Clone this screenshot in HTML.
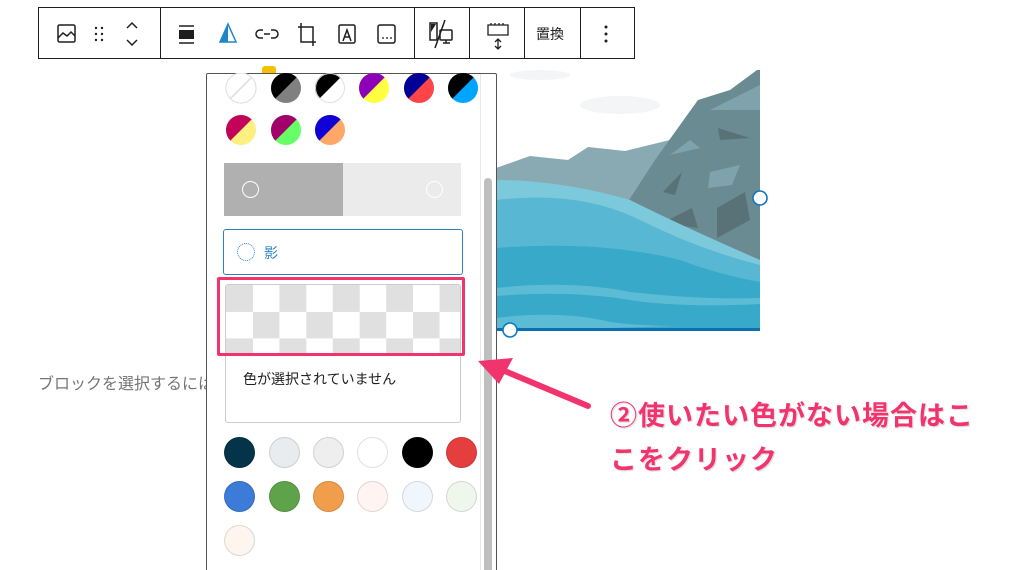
<!DOCTYPE html>
<html><head><meta charset="utf-8"><style>
*{box-sizing:border-box;margin:0;padding:0}
html,body{width:1024px;height:570px;overflow:hidden}
body{background:#fff;position:relative;font-family:"Liberation Sans","Noto Sans CJK JP",sans-serif}
.abs{position:absolute}
.tb{position:absolute;left:38px;top:7px;width:597px;height:52px;border:1px solid #1e1e1e;background:#fff}
.dv{position:absolute;top:0;width:1px;height:50px;background:#1e1e1e}
.sw{position:absolute;width:31px;height:31px;border-radius:50%;border:1px solid rgba(0,0,0,.12)}
.pop{position:absolute;left:206px;top:73px;width:291px;height:520px;border:1px solid #555;background:#fff;border-radius:2px;overflow:hidden}
.ann{position:absolute;color:#f2346e;font-weight:bold;font-size:27px;letter-spacing:1px;text-shadow:0 0 2px #fff,1px 1px 1px #ccc,0 0 4px #fff}
</style></head><body>

<div class="abs" style="left:38px;top:370px;width:168px;overflow:hidden;font-size:16px;color:#757575;white-space:nowrap">ブロックを選択するには</div>

<!-- image -->
<svg class="abs" style="left:480px;top:60px" width="300" height="290" viewBox="0 0 300 290">
<g fill="#f4f5f6"><ellipse cx="140" cy="45" rx="40" ry="9"/><ellipse cx="60" cy="15" rx="30" ry="5"/></g>
<path d="M16 108 L50 96 L88 100 L108 87 L145 91 L190 80 L280 70 L280 200 L16 200Z" fill="#89aab3"/>
<path d="M136 160 L175 100 L200 65 L218 40 L250 30 L277 10 L280 10 L280 210 L200 200Z" fill="#6a8b92"/>
<path d="M230 50 L280 25 L280 50Z M190 95 L210 80 L220 88Z M230 112 L260 105 L252 125 L228 128Z" fill="#7fa3ad"/>
<path d="M238 68 L270 78 L240 80Z M183 132 L202 112 L195 135Z M182 163 L212 148 L218 168Z M237 148 L265 132 L270 160 L237 178Z" fill="#587278"/>
<path d="M16 120 Q80 120 150 140 Q200 165 280 200 L280 271 L16 271Z" fill="#7cc9dc"/>
<path d="M16 140 Q100 130 160 160 Q220 190 280 205 L280 271 L16 271Z" fill="#58b7d2"/>
<path d="M16 188 Q120 180 200 200 Q240 215 280 222 L280 271 L16 271Z" fill="#38a9c9"/>
<path d="M16 228 Q90 220 150 232 Q220 240 280 238 L280 244 Q200 248 150 240 Q90 230 16 236Z M16 258 Q80 250 130 262 Q160 266 200 266 L16 271Z" fill="#5dbcd5"/>
<rect x="16" y="268" width="264" height="3" fill="#0a6fb0"/>
<circle cx="280" cy="138" r="7" fill="#fff" stroke="#0a78c2" stroke-width="1.6"/>
<circle cx="30" cy="270" r="7" fill="#fff" stroke="#0a78c2" stroke-width="1.6"/>
</svg>

<!-- toolbar -->
<div class="tb">
<div class="dv" style="left:121px"></div><div class="dv" style="left:375px"></div><div class="dv" style="left:430px"></div><div class="dv" style="left:485px"></div><div class="dv" style="left:541px"></div>
<svg class="abs" style="left:0;top:0" width="597" height="52" fill="none" stroke="#1e1e1e" stroke-width="1.5">
<rect x="19" y="17" width="17" height="17" rx="1.5"/><path d="M19 30 L24 25 L28 28 L32 24 L36 28"/>
<g fill="#1e1e1e" stroke="none"><circle cx="57" cy="20" r="1.2"/><circle cx="63" cy="20" r="1.2"/><circle cx="57" cy="26" r="1.2"/><circle cx="63" cy="26" r="1.2"/><circle cx="57" cy="32" r="1.2"/><circle cx="63" cy="32" r="1.2"/></g>
<path d="M88 20 L93 15 L98 20 M88 32 L93 37 L98 32"/>
<path d="M140 18 H155 M140 35 H155"/><rect x="140" y="22" width="15" height="9" fill="#1e1e1e" stroke="none"/>
<path d="M189 16 L181 34 H197Z" fill="#fff" stroke="#1e87c9"/><path d="M189 16 L181 34 H189Z" fill="#1e87c9" stroke="none"/>
<path d="M224 22 H221 A4 4 0 0 0 221 30 H224 M232 22 H235 A4 4 0 0 1 235 30 H232 M225 26 H231"/>
<path d="M262 15 V34 H277 M259 19 H274 V38"/>
<rect x="300" y="17" width="16" height="18" rx="1.5"/><path d="M304 33 L308 22 L312 33 M305 29 H311"/>
<rect x="339" y="17" width="17" height="18" rx="2"/><path d="M343 30 H345 M347 30 H349 M351 30 H353" stroke-width="1.2"/>
<path d="M391 15 H398 V32 H391Z" /><path d="M392 16 L397 16 L392 24Z" fill="#1e1e1e" stroke="none"/>
<rect x="401" y="22" width="12" height="10" rx="1"/><path d="M404 35 H411 M407 32 V35 M396 40 L406 12"/>
<path d="M449 17 H469 V27 H449Z M452 17 V15 M456 17 V15 M460 17 V15 M464 17 V15 M459 31 V41 M456 34 L459 31 L462 34 M456 38 L459 41 L462 38" stroke-width="1.3"/>
<g fill="#1e1e1e" stroke="none"><circle cx="567" cy="19" r="1.5"/><circle cx="567" cy="26" r="1.5"/><circle cx="567" cy="33" r="1.5"/></g>
</svg>
<div class="abs" style="left:497px;top:16px;font-size:14px;color:#1e1e1e">置換</div>
</div>
<div class="abs" style="left:262px;top:66px;width:14px;height:8px;background:#f5c000;border-radius:3px 3px 0 0"></div>

<!-- popover -->
<div class="pop">
<div class="abs" style="left:277px;top:104px;width:8px;height:420px;background:#bfbfbf;border-radius:4px"></div>
<div class="abs" style="left:273px;top:0;width:1px;height:520px;background:#e8e8e8"></div>
</div>
<svg class="abs" style="left:206px;top:73px" width="280" height="100" viewBox="0 0 280 100">
<defs><clipPath id="c"><circle r="15"/></clipPath></defs>
<g transform="translate(35,15)"><circle r="15" fill="#fff" stroke="#ddd"/><path d="M-10 10 L10 -10" stroke="#ddd" stroke-width="1.5"/></g>
<g transform="translate(80,15)" clip-path="url(#c)"><rect x="-16" y="-16" width="32" height="32" fill="#808080"/><path d="M-16 -16 H16 L-16 16Z" fill="#000"/></g>
<g transform="translate(124,15)" clip-path="url(#c)"><rect x="-16" y="-16" width="32" height="32" fill="#fff"/><path d="M-16 -16 H16 L-16 16Z" fill="#000"/><circle r="14.5" fill="none" stroke="#ddd"/></g>
<g transform="translate(168,15)" clip-path="url(#c)"><rect x="-16" y="-16" width="32" height="32" fill="#ffff40"/><path d="M-16 -16 H16 L-16 16Z" fill="#8c00b7"/></g>
<g transform="translate(213,15)" clip-path="url(#c)"><rect x="-16" y="-16" width="32" height="32" fill="#fd4449"/><path d="M-16 -16 H16 L-16 16Z" fill="#000097"/></g>
<g transform="translate(257,15)" clip-path="url(#c)"><rect x="-16" y="-16" width="32" height="32" fill="#00a5ff"/><path d="M-16 -16 H16 L-16 16Z" fill="#000"/></g>
<g transform="translate(35,57)" clip-path="url(#c)"><rect x="-16" y="-16" width="32" height="32" fill="#fdf080"/><path d="M-16 -16 H16 L-16 16Z" fill="#c2035a"/></g>
<g transform="translate(80,57)" clip-path="url(#c)"><rect x="-16" y="-16" width="32" height="32" fill="#66ff66"/><path d="M-16 -16 H16 L-16 16Z" fill="#a2006b"/></g>
<g transform="translate(124,57)" clip-path="url(#c)"><rect x="-16" y="-16" width="32" height="32" fill="#fea766"/><path d="M-16 -16 H16 L-16 16Z" fill="#1100d6"/></g>
</svg>
<div class="abs" style="left:224px;top:163px;width:119px;height:53px;background:#b0b0b0"></div>
<div class="abs" style="left:343px;top:163px;width:118px;height:53px;background:#ebebeb"></div>
<div class="abs" style="left:242px;top:181px;width:17px;height:17px;border:1.5px solid #fff;border-radius:50%"></div>
<div class="abs" style="left:426px;top:181px;width:17px;height:17px;border:1.5px solid #fff;border-radius:50%"></div>
<div class="abs" style="left:223px;top:229px;width:240px;height:46px;border:1.5px solid #2b84c2;border-radius:3px"></div>
<div class="abs" style="left:237px;top:243px;width:18px;height:18px;border:1.5px dotted #2b84c2;border-radius:50%"></div>
<div class="abs" style="left:264px;top:243px;font-size:14px;color:#2b84c2">影</div>
<div class="abs" style="left:225px;top:284px;width:236px;height:139px;border:1px solid #ccc;border-radius:3px;overflow:hidden">
<div style="height:71px;background-color:#fff;background-image:conic-gradient(#fff 0 25%,#e0e0e0 0 50%,#fff 0 75%,#e0e0e0 0);background-size:53.4px 53.4px;background-position:0 0"></div>
</div>
<div class="abs" style="left:217px;top:277px;width:248px;height:79px;border:3px solid #f2346e;border-radius:2px"></div>
<div class="abs" style="left:243px;top:369px;font-size:14px;color:#1e1e1e">色が選択されていません</div>
<div class="sw" style="left:224px;top:437px;background:#04344a"></div>
<div class="sw" style="left:269px;top:437px;background:#e8ecef"></div>
<div class="sw" style="left:313px;top:437px;background:#eeeeee"></div>
<div class="sw" style="left:357px;top:437px;background:#fff"></div>
<div class="sw" style="left:402px;top:437px;background:#000"></div>
<div class="sw" style="left:446px;top:437px;background:#e43e3e"></div>
<div class="sw" style="left:224px;top:481px;background:#3c7bd7"></div>
<div class="sw" style="left:269px;top:481px;background:#5ea34a"></div>
<div class="sw" style="left:313px;top:481px;background:#f09e4c"></div>
<div class="sw" style="left:357px;top:481px;background:#fff4f1"></div>
<div class="sw" style="left:402px;top:481px;background:#f1f6fd"></div>
<div class="sw" style="left:446px;top:481px;background:#eff7ed"></div>
<div class="sw" style="left:224px;top:525px;background:#fdf5ee"></div>

<!-- arrow -->
<svg class="abs" style="left:470px;top:340px" width="130" height="80">
<path d="M118 66 L30 29" stroke="#f2346e" stroke-width="6" stroke-linecap="round"/>
<path d="M8 21 L43 18 L29 44Z" fill="#f2346e"/>
</svg>
<div class="ann" style="left:610px;top:394px">②使いたい色がない場合はこ</div>
<div class="ann" style="left:610px;top:438px">こをクリック</div>
</body></html>
